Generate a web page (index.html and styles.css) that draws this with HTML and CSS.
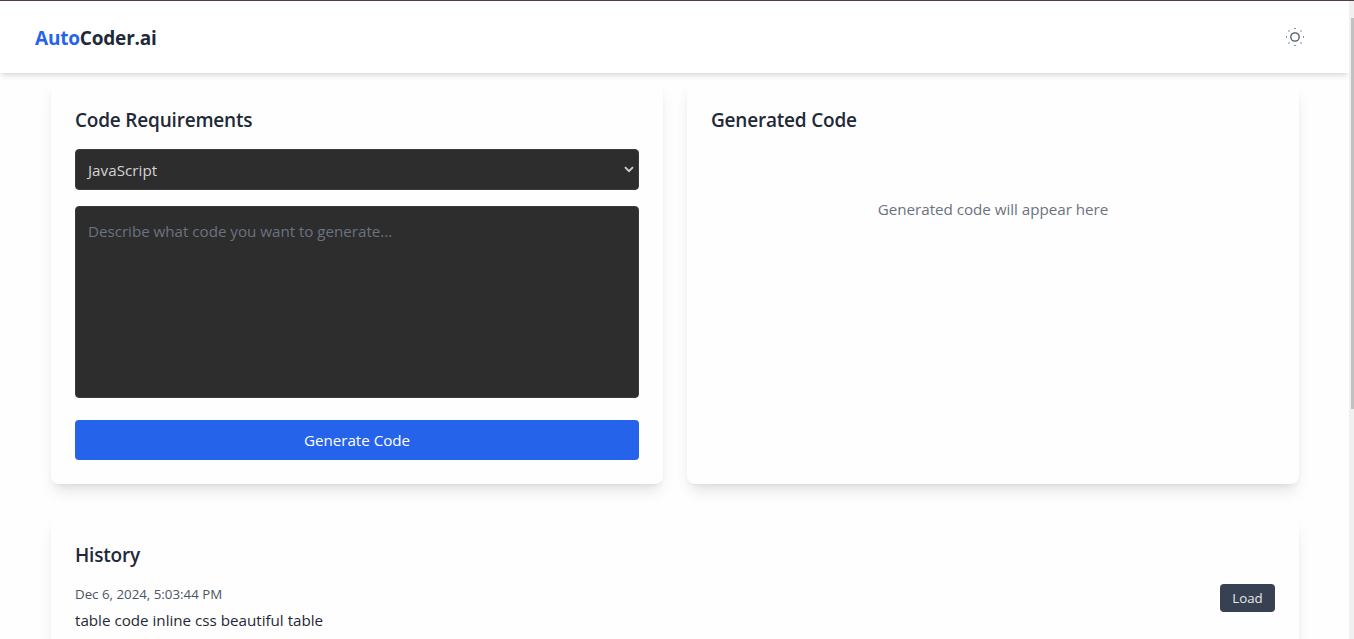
FILE: index.html
```html
<!DOCTYPE html>
<html lang="en">
<head>
<meta charset="utf-8">
<title>AutoCoder.ai</title>
<link rel="stylesheet" href="styles.css">
</head>
<body>
<div class="app">
  <div class="page">
    <header class="header">
      <div class="logo"><span class="logo-accent">Auto</span>Coder.ai</div>
      <button class="theme-toggle" aria-label="Toggle theme">
        <svg width="20" height="20" viewBox="0 0 20 20" fill="none">
          <circle cx="10" cy="10" r="4.2" stroke="#4b5563" stroke-width="1.3"/>
          <g fill="#8b909b"><rect x="9" y="1" width="2" height="1"/><rect x="9" y="18" width="2" height="1"/><rect x="1" y="9" width="1" height="2"/><rect x="18" y="9" width="1" height="2"/></g>
          <g fill="#c3c6cb"><rect x="3" y="3" width="2" height="2"/><rect x="15" y="3" width="2" height="2"/><rect x="3" y="15" width="2" height="2"/><rect x="15" y="15" width="2" height="2"/></g>
        </svg>
      </button>
    </header>
    <main class="main">
      <div class="panels">
        <section class="card">
          <h2 class="title">Code Requirements</h2>
          <div class="select"><span>JavaScript</span>
            <svg width="10" height="7" viewBox="0 0 10 7" fill="none"><path d="M1 1.2 5 5.2 9 1.2" stroke="#d1d1d1" stroke-width="1.9"/></svg>
          </div>
          <div class="prompt">Describe what code you want to generate...</div>
          <button class="generate">Generate Code</button>
        </section>
        <section class="card">
          <h2 class="title">Generated Code</h2>
          <p class="empty">Generated code will appear here</p>
        </section>
      </div>
      <section class="card history">
        <h2 class="title">History</h2>
        <div class="entry">
          <div>
            <p class="date">Dec 6, 2024, 5:03:44 PM</p>
            <p class="query">table code inline css beautiful table</p>
          </div>
          <button class="load">Load</button>
        </div>
      </section>
    </main>
  </div>
  <div class="scrollbar"><div class="thumb"></div></div>
</div>
</body>
</html>
```

FILE: styles.css
```css
* { box-sizing: border-box; margin: 0; padding: 0; }
html, body { height: 100%; overflow: hidden; }
body {
  font-family: "Segoe UI", "Open Sans", "Noto Sans", sans-serif;
  font-size: 15.2px;
  line-height: 24px;
  letter-spacing: -0.03px;
  color: #1f2937;
  background: #fefefe;
}
button { border: 0; font: inherit; letter-spacing: inherit; }
.app { display: flex; height: 639px; border-top: 1px solid #513f3e; }
.page { flex: 1; min-width: 0; overflow: hidden; }
.header {
  position: relative;
  display: flex;
  align-items: center;
  justify-content: space-between;
  height: 72px;
  padding: 0 44px 0 35px;
  background: #fff;
  box-shadow: 0 4px 6px -1px rgba(0,0,0,.1), 0 2px 4px -2px rgba(0,0,0,.1);
}
.logo { font-size: 19px; font-weight: 700; line-height: 28px; letter-spacing: -0.2px; padding-top: 1px; }
.logo-accent { color: #2563eb; }
.theme-toggle { width: 20px; height: 20px; background: none; }
.theme-toggle svg { display: block; }
.main { padding: 8px 50px 0 51px; }
.panels { display: grid; grid-template-columns: 612px 612px; gap: 24px; }
.card {
  height: 403px;
  padding: 24px;
  border-radius: 8px;
  background: #fefefe;
  box-shadow: 0 10px 15px -3px rgba(0,0,0,.1), 0 4px 6px -4px rgba(0,0,0,.1);
}
.title {
  padding-top: 1px;
  margin-bottom: 15px;
  font-size: 19px;
  font-weight: 600;
  line-height: 28px;
  letter-spacing: -0.2px;
}
.select {
  display: flex;
  align-items: center;
  justify-content: space-between;
  height: 41px;
  padding: 1px 4px 0 12px;
  border: 1px solid #3b3b3b;
  border-radius: 4px;
  background: #2d2d2d;
  color: #d4d4d4;
}
.select span { letter-spacing: 0.03px; }
.select svg { margin-top: -2px; }
.prompt {
  height: 192px;
  margin: 16px 0 22px;
  padding: 12px;
  border: 1px solid #3b3b3b;
  border-radius: 4px;
  background: #2d2d2d;
  color: #6b7280;
}
.generate {
  display: block;
  width: 100%;
  height: 40px;
  border-radius: 4px;
  background: #2563eb;
  color: #fff;
}
.empty { padding-top: 48px; text-align: center; color: #6b7280; }
.history { margin-top: 32px; }
.entry { display: flex; justify-content: space-between; align-items: flex-start; }
.date { margin-bottom: 4px; font-size: 13.3px; line-height: 20px; letter-spacing: 0; color: #4b5563; }
.query { letter-spacing: -0.01px; }
.load {
  width: 55px;
  height: 28px;
  border-radius: 4px;
  background: #374151;
  color: #e5e7eb;
  font-size: 13.3px;
  line-height: 20px;
}
.scrollbar { width: 5px; padding: 17px 0 0 2px; background: #f0f0f0; }
.thumb { height: 391px; background: #c1c1c1; }
```
